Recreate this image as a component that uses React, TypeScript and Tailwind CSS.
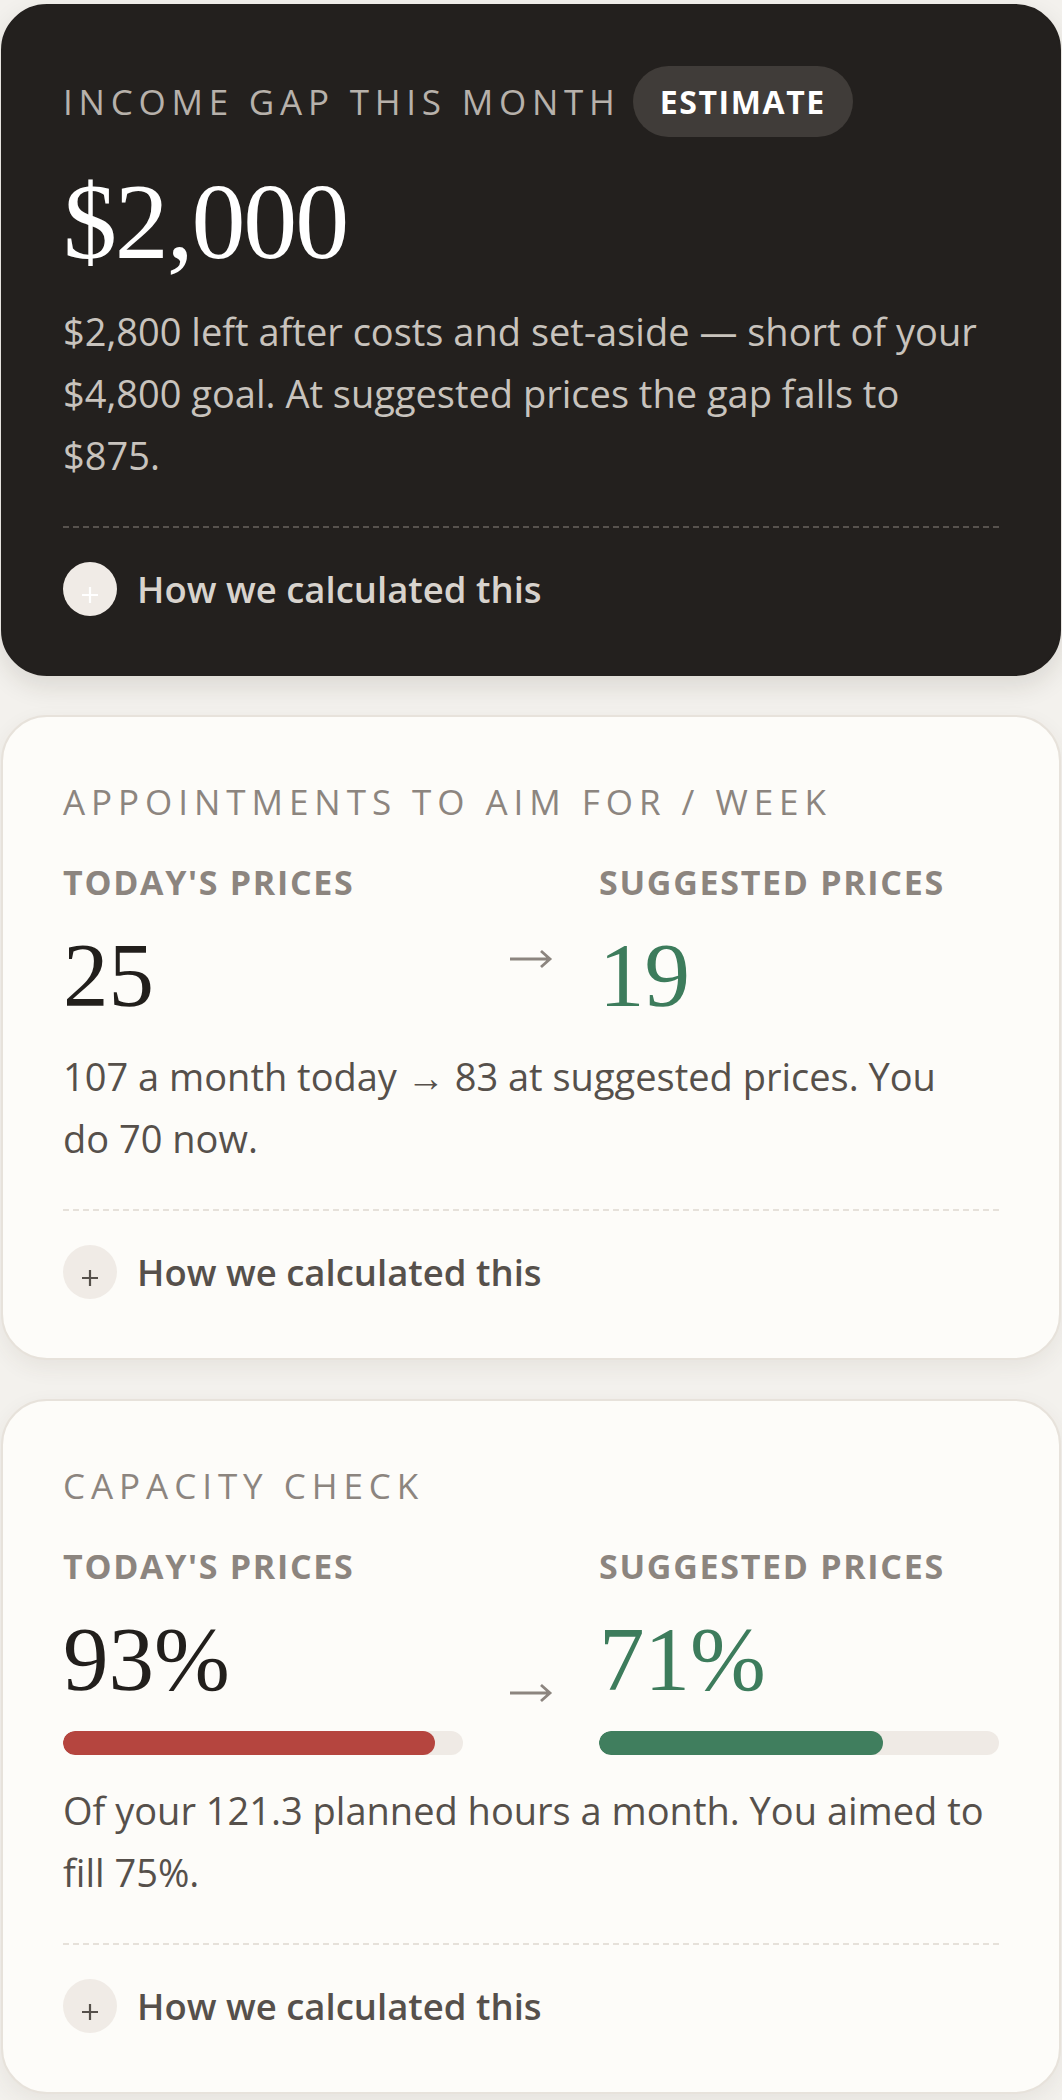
import type { ReactNode } from 'react'

const sans = "font-['Open_Sans',sans-serif]"
const serif = "font-['Liberation_Serif',serif]"

function Arrow() {
  return (
    <svg className="mb-[51px] self-end" width="44" height="22" viewBox="0 0 44 22" fill="none">
      <path d="M1 11h40M32 3l9 8-9 8" stroke="#8c857f" strokeWidth="2.8" />
    </svg>
  )
}

function HowCalculated({ dark }: { dark?: boolean }) {
  return (
    <div className="mt-[34px] flex items-center gap-5">
      <span className="flex h-[54px] w-[54px] shrink-0 items-center justify-center rounded-full bg-[#f0ebe6]">
        <svg className="mt-3" width="18" height="18" viewBox="0 0 18 18">
          <path d="M9 1v16M1 9h16" stroke={dark ? '#ffffff' : '#56504b'} strokeWidth="2.2" />
        </svg>
      </span>
      <span className={`text-[36.5px] leading-none font-semibold ${dark ? 'text-[#d8d3cd]' : 'text-[#56504b]'}`}>
        How we calculated this
      </span>
    </div>
  )
}

function Compare({ left, right, bars }: { left: string; right: string; bars?: [number, number] }) {
  return (
    <div className="mt-[36px] grid grid-cols-[1fr_auto_1fr] gap-x-[46px]">
      <div>
        <div className="text-[34px] leading-[42px] font-bold tracking-[0.05em] text-[#8c857f]">TODAY'S PRICES</div>
        <div className={`${serif} mt-[27px] text-[91px] leading-none text-[#221f1c]`}>{left}</div>
        {bars && (
          <div className="mt-[26px] h-6 overflow-hidden rounded-full bg-[#efeae5]">
            <div className="h-full rounded-full bg-[#b5453f]" style={{ width: `${bars[0]}%` }} />
          </div>
        )}
      </div>
      <Arrow />
      <div>
        <div className="text-[34px] leading-[42px] font-bold tracking-[0.05em] text-[#8c857f]">SUGGESTED PRICES</div>
        <div className={`${serif} mt-[27px] text-[91px] leading-none text-[#3d7c5c]`}>{right}</div>
        {bars && (
          <div className="mt-[26px] h-6 overflow-hidden rounded-full bg-[#efeae5]">
            <div className="h-full rounded-full bg-[#407e5e]" style={{ width: `${bars[1]}%` }} />
          </div>
        )}
      </div>
    </div>
  )
}

function LightCard({ title, children }: { title: string; children: ReactNode }) {
  return (
    <section className="rounded-[46px] border-2 border-[#e7e2db] bg-[#fdfcf9] px-[60px] pt-[62px] pb-[59px] shadow-[0_8px_22px_rgba(70,55,40,0.07)]">
      <h2 className="text-[35px] leading-[46px] font-medium tracking-[0.17em] text-[#8c857f]">{title}</h2>
      {children}
      <div className="mt-10 border-t-2 border-dashed border-[#e6e1da]" />
      <HowCalculated />
    </section>
  )
}

export default function App() {
  return (
    <div className={`${sans} min-h-screen bg-[#f3f1ed] px-px pt-[4px] pb-6`}>
      <div className="flex flex-col gap-[39px]">
        <section className="rounded-[46px] border-2 border-[#23201e] bg-[#23201e] px-[60px] pt-[60px] pb-[58px] shadow-[0_10px_26px_rgba(40,30,20,0.12)]">
          <div className="flex items-center gap-[12px]">
            <h2 className="text-[35px] leading-[46px] font-medium tracking-[0.165em] text-[#b7b1ab]">INCOME GAP THIS MONTH</h2>
            <span className="flex h-[71px] items-center rounded-full bg-[#403c39] px-[27px] text-[32px] font-bold tracking-[0.05em] text-white">
              ESTIMATE
            </span>
          </div>
          <div className={`${serif} mt-[31px] text-[108px] leading-none tracking-[-0.02em] text-white`}>$2,000</div>
          <p className="mt-6 text-[38px] leading-[62px] text-[#c8c3bd]">
            $2,800 left after costs and set-aside — short of your $4,800 goal. At suggested prices the gap falls to $875.
          </p>
          <div className="mt-10 border-t-2 border-dashed border-[#57524e]" />
          <HowCalculated dark />
        </section>

        <LightCard title="APPOINTMENTS TO AIM FOR / WEEK">
          <Compare left="25" right="19" />
          <p className="mt-6 text-[38px] leading-[62px] text-[#56504b]">
            107 a month today → 83 at suggested prices. You
            <br />
            do 70 now.
          </p>
        </LightCard>

        <LightCard title="CAPACITY CHECK">
          <Compare left="93%" right="71%" bars={[93, 71]} />
          <p className="mt-6 text-[38px] leading-[62px] text-[#56504b]">
            Of your 121.3 planned hours a month. You aimed to fill 75%.
          </p>
        </LightCard>
      </div>
    </div>
  )
}
